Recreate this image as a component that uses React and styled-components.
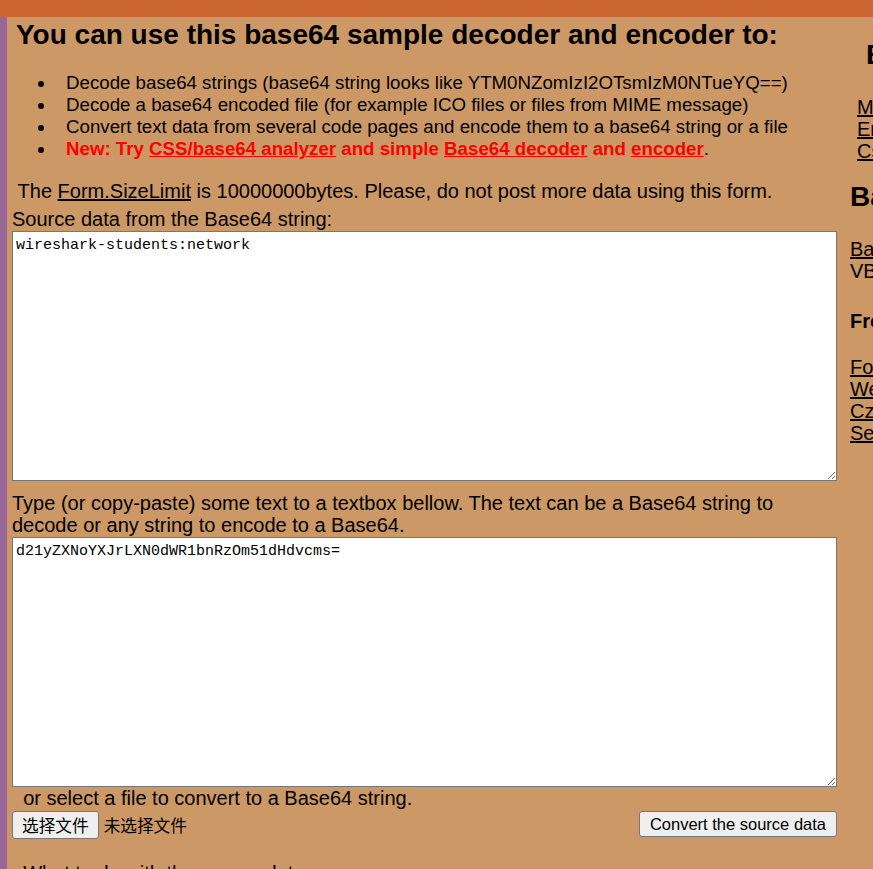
import React from "react";
import styled, { createGlobalStyle } from "styled-components";

const GlobalStyle = createGlobalStyle`
  html, body {
    margin: 0;
    padding: 0;
    overflow: hidden;
    background-color: #cc9966;
  }
  body {
    font-family: "Liberation Sans", Arial, sans-serif;
    color: #000;
  }
`;

const Page = styled.div`
  min-height: 100vh;
  overflow: hidden;
`;

const TopBar = styled.div`
  height: 17px;
  background-color: #cc6633;
`;

const Layout = styled.div`
  display: flex;
  align-items: flex-start;
  gap: 13px;
  border-left: 7px solid #996699;
  min-height: calc(100vh - 17px);
  padding-left: 5px;
`;

const Main = styled.div`
  flex: 0 0 825px;
  width: 825px;
`;

const Title = styled.h2`
  margin: 2px 0 0;
  padding-left: 4px;
  font-size: 28px;
  line-height: 32px;
  font-weight: bold;
`;

const FeatureList = styled.ul`
  list-style: none;
  margin: 21px 0 0 26px;
  padding: 0;
  font-size: 18.7px;
  line-height: 22px;
`;

const Feature = styled.li`
  display: flex;
  color: ${({ $hot }) => ($hot ? "#ff0000" : "#000")};
  font-weight: ${({ $hot }) => ($hot ? "bold" : "normal")};

  &::before {
    content: "";
    flex: 0 0 6px;
    height: 6px;
    margin: 9px 22px 0 0;
    border-radius: 50%;
    background-color: #000;
  }
`;

const Link = styled.a`
  color: inherit;
  text-decoration: underline;
`;

const Plain = styled.span`
  color: #000;
  font-weight: normal;
`;

const Text = styled.div`
  font-size: 20px;
  line-height: 22px;
  margin-top: ${({ $gap }) => $gap || 0}px;
  white-space: pre-wrap;
`;

const TextBox = styled.textarea`
  display: block;
  box-sizing: border-box;
  width: 825px;
  height: 250px;
  margin: 1px 0 0;
  padding: 5px 3px 3px;
  border: 1px solid #767676;
  background: #fff;
  font-family: "Liberation Mono", "Courier New", monospace;
  font-size: 15px;
  line-height: 17px;
  color: #000;
  outline: none;
`;

const ActionRow = styled.div`
  display: flex;
  justify-content: space-between;
  align-items: flex-start;
  margin-top: 2px;
`;

const FilePick = styled.div`
  display: flex;
  align-items: center;
  gap: 5px;
  font-family: "Liberation Sans", "Noto Sans CJK SC", sans-serif;
  font-size: 16.67px;
`;

const Button = styled.button`
  box-sizing: border-box;
  height: ${({ $tall }) => ($tall ? 28 : 26)}px;
  padding: 0 ${({ $tall }) => ($tall ? 9 : 10)}px;
  border: 1px solid #767676;
  border-radius: 3px;
  background-color: #efefef;
  color: #000;
  font-family: "Liberation Sans", "Noto Sans CJK SC", sans-serif;
  font-size: ${({ $tall }) => ($tall ? 16.67 : 16.5)}px;
  cursor: pointer;
`;

const Side = styled.div`
  flex: 0 0 240px;
  white-space: nowrap;
`;

const SideTitle = styled.h3`
  margin: ${({ $top }) => $top}px 0 0;
  padding-left: ${({ $indent }) => $indent || 0}px;
  font-size: 28px;
  line-height: 32px;
  font-weight: bold;
`;

const SideLinks = styled.div`
  display: flex;
  flex-direction: column;
  margin-top: ${({ $top }) => $top}px;
  padding-left: ${({ $indent }) => $indent || 0}px;
  font-size: 20px;
  line-height: 22px;
`;

const SideHead = styled.div`
  margin-top: ${({ $top }) => $top}px;
  font-size: 20px;
  line-height: 22px;
  font-weight: bold;
`;

const App = () => {
  return (
    <Page>
      <GlobalStyle />
      <TopBar />
      <Layout>
        <Main>
          <Title>You can use this base64 sample decoder and encoder to:</Title>
          <FeatureList>
            <Feature>Decode base64 strings (base64 string looks like YTM0NZomIzI2OTsmIzM0NTueYQ==)</Feature>
            <Feature>Decode a base64 encoded file (for example ICO files or files from MIME message)</Feature>
            <Feature>Convert text data from several code pages and encode them to a base64 string or a file</Feature>
            <Feature $hot>
              <span>
                New: Try <Link href="#">CSS/base64 analyzer</Link> and simple{" "}
                <Link href="#">Base64 decoder</Link> and <Link href="#">encoder</Link>
                <Plain>.</Plain>
              </span>
            </Feature>
          </FeatureList>

          <Text $gap={20}>
            {" The "}<Link href="#">Form.SizeLimit</Link>
            {" is 10000000bytes. Please, do not post more data using this form."}
          </Text>
          <Text $gap={6}>Source data from the Base64 string:</Text>
          <TextBox defaultValue="wireshark-students:network" />

          <Text $gap={11}>
            Type (or copy-paste) some text to a textbox bellow. The text can be a Base64 string to
            decode or any string to encode to a Base64.
          </Text>
          <TextBox defaultValue="d21yZXNoYXJrLXN0dWR1bnRzOm51dHdvcms=" />

          <Text>{"  or select a file to convert to a Base64 string."}</Text>
          <ActionRow>
            <FilePick>
              <Button $tall>选择文件</Button>
              <span>未选择文件</span>
            </FilePick>
            <Button>Convert the source data</Button>
          </ActionRow>
          <Text $gap={23}>{"  What to do with the source data:"}</Text>
        </Main>

        <Side>
          <SideTitle $top={22} $indent={16}>Base64 online</SideTitle>
          <SideLinks $top={25} $indent={7}>
            <Link href="#">Motobit software</Link>
            <Link href="#">English version</Link>
            <Link href="#">Cs - Česky</Link>
          </SideLinks>

          <SideTitle $top={19}>Base64 tools</SideTitle>
          <SideLinks $top={25}>
            <Link href="#">Base64 encoder/decoder</Link>
            <span>VBScript base64 decode</span>
          </SideLinks>

          <SideHead $top={28}>Free utilities</SideHead>
          <SideLinks $top={24}>
            <Link href="#">Form upload samples</Link>
            <Link href="#">Web tools</Link>
            <Link href="#">Czech encoder</Link>
            <Link href="#">Search site</Link>
          </SideLinks>
        </Side>
      </Layout>
    </Page>
  );
};

export default App;
